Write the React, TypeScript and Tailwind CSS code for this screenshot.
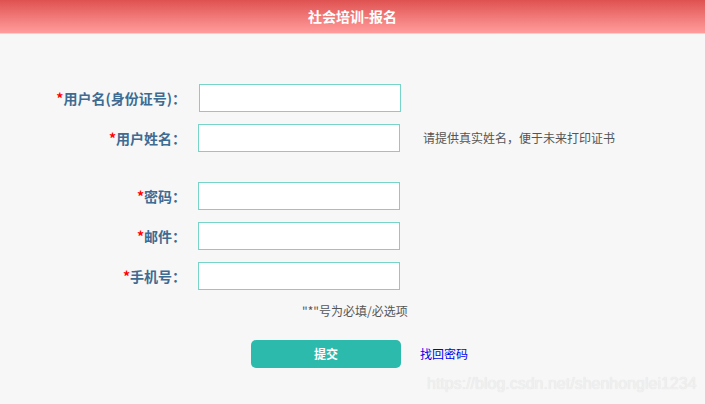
import React from "react";

const font = { fontFamily: '"Noto Sans CJK SC", "Noto Sans", sans-serif' };

function Row({ label, ml = "ml-[12px]", hint }: { label: string; ml?: string; hint?: string }) {
    return (
        <div className="flex items-center h-[28px]">
            <label className="w-[186px] text-right text-[14px] font-bold text-[#3e6b92] leading-none whitespace-nowrap">
                <span className="text-[#ff0000] text-[14px]">*</span>
                {label}
            </label>
            <input
                type="text"
                className={`${ml} w-[202px] h-[28px] bg-white border border-[#78d4c9] outline-none px-2 text-[13px]`}
            />
            {hint && <span className="ml-[23px] text-[12px] text-[#555555]">{hint}</span>}
        </div>
    );
}

export default function App() {
    return (
        <div className="w-[705px] h-[404px] bg-[#f7f7f7] relative overflow-hidden" style={font}>
            <div className="h-[34px] border-b border-[#dcdcdc] bg-gradient-to-b from-[#df5151] to-[#ff9c9c] flex items-center justify-center">
                <h1 className="text-white text-[14px] font-bold">社会培训-报名</h1>
            </div>

            <form className="pt-[50px] flex flex-col">
                <div className="flex flex-col gap-[12px]">
                    <Row label="用户名(身份证号)：" ml="ml-[13px]" />
                    <Row label="用户姓名：" hint="请提供真实姓名，便于未来打印证书" />
                </div>
                <div className="flex flex-col gap-[12px] mt-[30px]">
                    <Row label="密码：" />
                    <Row label="邮件：" />
                    <Row label="手机号：" />
                </div>
                <p className="mt-[13px] pl-[302px] text-[12px] text-[#555555] leading-[16px]">"*"号为必填/必选项</p>
                <div className="mt-[21px] flex items-center">
                    <button
                        type="button"
                        className="ml-[251px] w-[150px] h-[28px] rounded-[5px] bg-[#2cbaad] text-white text-[12px] font-bold"
                    >
                        提交
                    </button>
                    <a href="#" className="ml-[19px] text-[12px] text-[#0000ee]">找回密码</a>
                </div>
            </form>

            <div
                className="absolute left-[427px] top-[376px] text-[16px] text-[#f0f0f0] whitespace-nowrap leading-none"
                style={{ fontFamily: '"Liberation Sans", Arial, sans-serif', textShadow: "0 0 1px #dedede" }}
            >
                https://blog.csdn.net/shenhonglei1234
            </div>
        </div>
    );
}
